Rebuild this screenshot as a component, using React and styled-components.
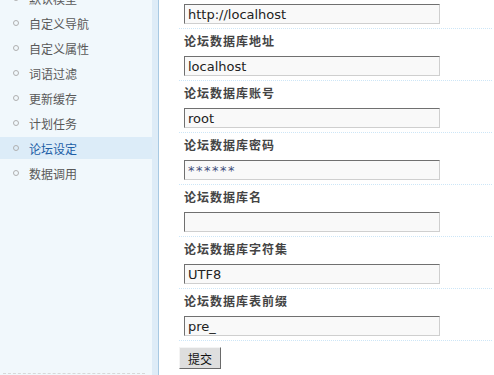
import React from "react";
import styled, { createGlobalStyle } from "styled-components";

const GlobalStyle = createGlobalStyle`
  html, body {
    margin: 0;
    padding: 0;
    background: #ffffff;
    overflow: hidden;
  }
  body {
    font-family: "Noto Sans CJK SC", "DejaVu Sans", sans-serif;
    font-size: 12px;
  }
`;

const menu = [
  "默认模型",
  "自定义导航",
  "自定义属性",
  "词语过滤",
  "更新缓存",
  "计划任务",
  "论坛设定",
  "数据调用",
];

const fields = [
  { label: null, value: "http://localhost" },
  { label: "论坛数据库地址", value: "localhost" },
  { label: "论坛数据库账号", value: "root" },
  { label: "论坛数据库密码", value: "******", secret: true },
  { label: "论坛数据库名", value: "" },
  { label: "论坛数据库字符集", value: "UTF8" },
  { label: "论坛数据库表前缀", value: "pre_" },
];

export default function App() {
  return (
    <>
      <GlobalStyle />
      <Page>
        <SidebarFrame>
          <SidebarPanel>
            <MenuList>
              {menu.map((name) => (
                <MenuItem key={name} $active={name === "论坛设定"}>
                  <Bullet />
                  {name}
                </MenuItem>
              ))}
            </MenuList>
            <SidebarFoot />
          </SidebarPanel>
        </SidebarFrame>
        <Main>
          <form onSubmit={(e) => e.preventDefault()}>
            {fields.map((f, i) => (
              <Row key={i} $bare={!f.label}>
                {f.label && <Label>{f.label}</Label>}
                <TextInput
                  type="text"
                  defaultValue={f.value}
                  $secret={f.secret}
                  $bare={!f.label}
                />
              </Row>
            ))}
            <SubmitButton type="submit">提交</SubmitButton>
          </form>
        </Main>
      </Page>
    </>
  );
}

const Page = styled.div`
  display: flex;
  height: 375px;
  overflow: hidden;
`;

const SidebarFrame = styled.div`
  display: flex;
  flex-shrink: 0;
  padding-right: 6px;
  background: #deecf7;
  border-right: 1px solid #a8c9e2;
`;

const SidebarPanel = styled.div`
  width: 152px;
  display: flex;
  flex-direction: column;
  background: #f1f8fc;
`;

const MenuList = styled.ul`
  list-style: none;
  margin: -13px 0 0 0;
  padding: 0;
`;

const MenuItem = styled.li`
  display: flex;
  align-items: center;
  height: 22px;
  margin-bottom: 3px;
  padding-left: 13px;
  color: ${(p) => (p.$active ? "#1d5ea6" : "#595959")};
  background: ${(p) => (p.$active ? "#dcecf8" : "transparent")};
  font-size: 12px;
  white-space: nowrap;
`;

const Bullet = styled.span`
  width: 4px;
  height: 4px;
  border: 1px solid #b0b0b0;
  border-radius: 50%;
  margin-right: 10px;
  flex-shrink: 0;
`;

const SidebarFoot = styled.div`
  margin: auto 7px 1px 3px;
  border-top: 1px dashed #d8d8d8;
`;

const Main = styled.div`
  flex: 1;
  padding: 0 2px 0 20px;
  margin-top: -23px;
`;

const Row = styled.div`
  padding: ${(p) => (p.$bare ? "27px 5px 4px" : "2px 5px 4px")};
  border-bottom: 1px dotted #cde6f7;
`;

const Label = styled.div`
  height: 20px;
  line-height: 20px;
  font-weight: bold;
  font-size: 12px;
  letter-spacing: 1px;
  color: #444444;
  white-space: nowrap;
`;

const TextInput = styled.input`
  display: block;
  box-sizing: border-box;
  width: 256px;
  height: 20px;
  margin: ${(p) => (p.$bare ? "0" : "5px 0 0")};
  padding: 0 3px;
  border-style: solid;
  border-width: 1px;
  border-color: #707070 #cfcfcf #cfcfcf #707070;
  background: #f9f9f9;
  font-family: "DejaVu Sans", sans-serif;
  font-size: 13px;
  color: ${(p) => (p.$secret ? "#3f4f7a" : "#222222")};
  letter-spacing: ${(p) => (p.$secret ? "1.5px" : "0")};
  outline: none;
`;

const SubmitButton = styled.button`
  display: block;
  width: 42px;
  height: 22px;
  margin-top: 6px;
  padding: 0;
  border-style: solid;
  border-width: 1px;
  border-color: #f4f4f4 #6a6a6a #6a6a6a #f4f4f4;
  background: #dedede;
  font-family: "Noto Sans CJK SC", sans-serif;
  font-size: 12px;
  color: #111111;
`;
